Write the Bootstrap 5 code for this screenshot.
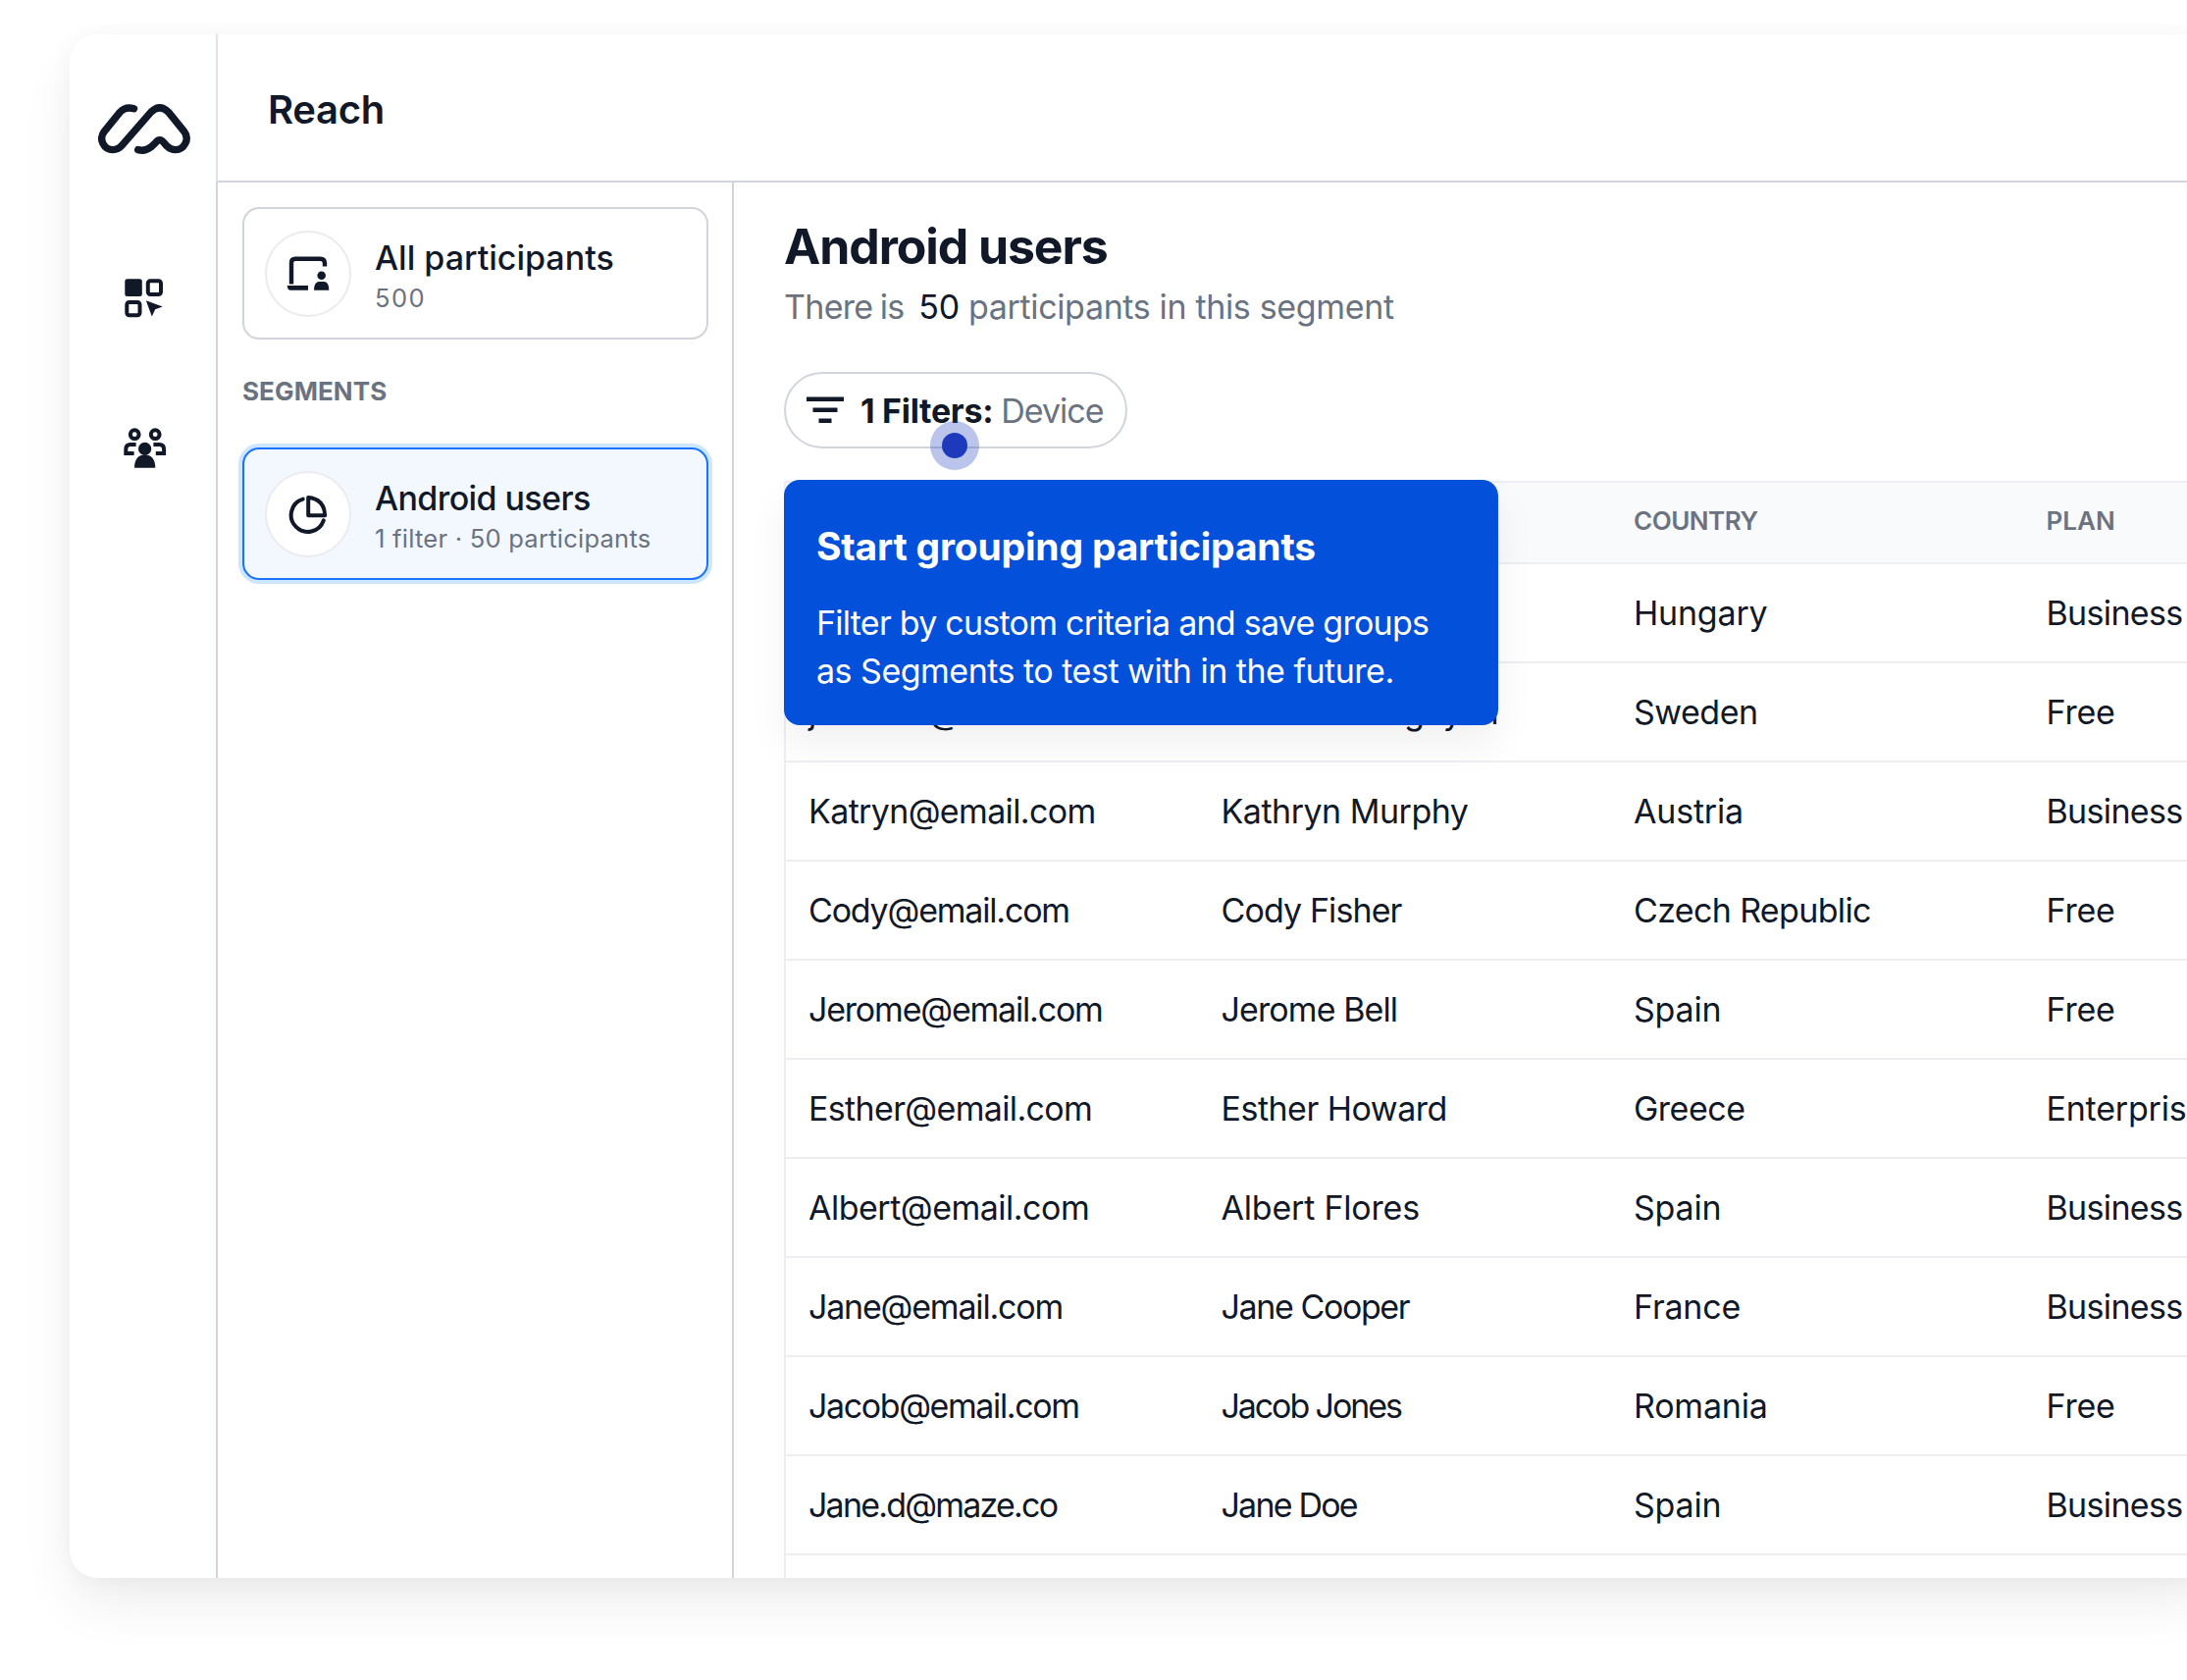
<!DOCTYPE html>
<html lang="en">
<head>
<meta charset="utf-8">
<meta name="viewport" content="width=device-width, initial-scale=1">
<title>Reach</title>
<link href="https://cdn.jsdelivr.net/npm/bootstrap@5.3.0/dist/css/bootstrap.min.css" rel="stylesheet">
<style>
:root { --ink: #111827; --muted: #6b7280; --line: #d1d5db; --hair: #ededf2; }
html, body { height: 100%; }
body { font-family: Inter, "Liberation Sans", sans-serif; font-size: 34px; color: var(--ink); background: #fff; overflow: hidden; }
.ink { color: var(--ink); }
.muted { color: var(--muted); }
.app-frame { width: 2186px; height: 1573px; margin: 35px 0 0 71px; border-radius: 28px; background: #fff;
  box-shadow: 0 28px 56px -4px rgba(0,0,0,.075), 0 2px 24px rgba(0,0,0,.04); }
.app-inner { border-radius: 28px; }
.rail { width: 149px; padding-left: 29px; }
.rail .logo { margin-top: 71px; }
.rail .nav-a { margin: 127px 0 0 27px; }
.rail .nav-b { margin: 112px 0 0 26px; }
.topbar { height: 151px; padding: 4px 0 0 51px; border-left: 2px solid #dfe2e7; border-bottom: 2px solid var(--line); }
.topbar h1 { font-size: 40px; font-weight: 600; letter-spacing: -.3px; }
.side-panel { width: 528px; padding: 25px 24px 0 25px; border-left: 2px solid var(--line); border-right: 2px solid var(--line); }
.seg { height: 135px; border: 2px solid var(--line); border-radius: 17px; padding-left: 21px; }
.seg.active { border-color: #1a73ff; background: #f3f8ff; box-shadow: 0 0 0 4px #cce6ff; }
.seg-icon { width: 88px; height: 88px; border: 2px solid #ebebf0; }
.seg-text { margin: 8px 0 0 24px; white-space: nowrap; }
.seg-title { font-weight: 500; line-height: 42px; letter-spacing: 0; }
.seg.active .seg-title { letter-spacing: -.6px; }
.seg-sub { font-size: 25.5px; line-height: 40px; letter-spacing: .25px; }
.seg-sub.fig { letter-spacing: 1.5px; }
.seg-label { font-size: 26px; font-weight: 700; line-height: 32px; margin: 37px 0 41px; letter-spacing: .1px; }
.main-pane { padding: 35px 0 0 51px; }
.main-pane h2 { font-size: 50px; font-weight: 700; line-height: 60px; letter-spacing: -1.1px; }
.lead-line { line-height: 40px; margin-top: 12px; white-space: pre; letter-spacing: -.35px; }
.lead-line .pre { letter-spacing: -.7px; word-spacing: -1.5px; }
.filter-wrap { margin-top: 46px; width: 350px; }
.pill { height: 78px; border: 2px solid var(--line); padding-left: 21px; white-space: nowrap; }
.pill .cnt { margin-left: 17px; letter-spacing: -.3px; }
.pill .dev { margin-left: 8px; letter-spacing: -1px; }
.hotspot { left: 149px; top: 50px; width: 50px; height: 50px; background: rgba(30,58,188,.3); z-index: 3; }
.hotspot::after { content: ""; width: 26px; height: 26px; border-radius: 50%; background: #1e3abc; }
.tip { left: 0; top: 110px; width: 728px; height: 250px; padding: 44px 0 0 33px; border-radius: 16px; background: #0350db; color: #fff; z-index: 2; white-space: nowrap;
  box-shadow: 0 20px 40px rgba(0,0,0,.06); }
.tip h3 { font-size: 39px; font-weight: 700; line-height: 48px; letter-spacing: -.2px; }
.tip p { line-height: 49px; margin-top: 29px; letter-spacing: -.5px; }
.tip p::first-line { letter-spacing: -.75px; }
.people { width: 1683px; margin-top: 33px; table-layout: fixed; border-left: 2px solid var(--hair); color: var(--ink); letter-spacing: -.2px; }
.people th, .people td { padding: 0 0 0 24px; vertical-align: middle; border-bottom: 2px solid var(--hair); white-space: nowrap; color: var(--ink); }
.people thead th { height: 83px; padding-bottom: 5px; border-top: 2px solid var(--hair); background: #f9fafc; font-size: 26px; font-weight: 600; color: var(--muted); letter-spacing: 0; }
.people tbody td { height: 101px; padding-bottom: 1px; }
.people td:first-child { padding-left: 23px; }
.people .k1 { letter-spacing: -.5px; }
.people .k2 { letter-spacing: -.65px; }
.people .k3 { letter-spacing: -.9px; }
.people .k4 { letter-spacing: -1.2px; }
.people .k5 { letter-spacing: -1.4px; }
.people .k6 { letter-spacing: -1.8px; }
.people .k7 { letter-spacing: -2.1px; }
</style>
<script src="https://cdn.jsdelivr.net/npm/bootstrap@5.3.0/dist/js/bootstrap.bundle.min.js"></script>
</head>
<body>
<div class="app-frame">
 <div class="app-inner d-flex h-100 overflow-hidden">
  <nav class="rail d-flex flex-column align-items-start flex-shrink-0">
    <svg class="logo" width="94" height="51" viewBox="150 257 280 152" fill="none" stroke="#111827" stroke-width="22" stroke-linecap="round" stroke-linejoin="round"><path d="M259 271Q233 263 216 282L169 340C150 365 168 396 195 396Q211 396 223 382L310 282Q337 255 364 282L411 340C430 365 410 396 385 396Q370 396 359 385L350 375Q337 358 324 375L310 388Q293 402 271 396"/></svg>
    <svg class="nav-a" width="40" height="40" viewBox="0 0 40 40" fill="#111827"><rect x=".3" y=".3" width="17.5" height="17.7" rx="2.5"/><g fill="none" stroke="#111827" stroke-width="4"><rect x="23.8" y="2.3" width="13.2" height="13.7" rx="2.4"/><rect x="2.3" y="24" width="13.2" height="13.2" rx="2.4"/></g><path d="M21.8 22.3L38.8 28.4L31.2 31.2L27.8 38.4Z"/></svg>
    <svg class="nav-b" width="44" height="42" viewBox="0 0 44 42" fill="#111827"><g fill="none" stroke="#111827" stroke-width="4"><circle cx="11.2" cy="6.7" r="4.4"/><circle cx="32.2" cy="6.7" r="4.4"/><path d="M12.6 17H7Q2.3 17 2.3 22V26H10.6M30.4 17H36.4Q41.1 17 41.1 22V26H32.8"/></g><circle cx="21.6" cy="21.4" r="6.6"/><path d="M11 40.8C11 32 15 27.6 21.6 27.6S32.3 32 32.3 40.8Z"/></svg>
  </nav>
  <div class="d-flex flex-column flex-grow-1">
    <header class="topbar d-flex align-items-center flex-shrink-0"><h1 class="m-0">Reach</h1></header>
    <div class="d-flex flex-grow-1">
      <aside class="side-panel flex-shrink-0">
        <div class="seg d-flex align-items-center">
          <div class="seg-icon rounded-circle bg-white d-flex align-items-center justify-content-center flex-shrink-0">
            <svg width="44" height="37" viewBox="0 0 44 37" fill="#111827"><path d="M5 29.5V7.8Q5 3.8 9 3.8H34.5Q39 3.8 39 8.3V11.5" fill="none" stroke="#111827" stroke-width="4.4"/><path d="M.7 31H22V35.8H4Q1 35.8 .7 31Z"/><circle cx="35.7" cy="20.7" r="4.3"/><path d="M28 35.8Q28 27 33.5 27H38Q43.3 27 43.3 35.8Z"/></svg>
          </div>
          <div class="seg-text"><div class="seg-title">All participants</div><div class="seg-sub muted fig">500</div></div>
        </div>
        <div class="seg-label muted">SEGMENTS</div>
        <div class="seg active d-flex align-items-center">
          <div class="seg-icon rounded-circle bg-white d-flex align-items-center justify-content-center flex-shrink-0">
            <svg width="40" height="40" viewBox="0 0 40 40" fill="none" stroke="#111827" stroke-width="4" stroke-linecap="round" stroke-linejoin="round"><path d="M14.7 4.6A17 17 0 1 0 35.8 26.3"/><path d="M20.2 3V21.2H37.2Q36.5 4.500 20.2 3Z"/></svg>
          </div>
          <div class="seg-text"><div class="seg-title">Android users</div><div class="seg-sub muted">1 filter · 50 participants</div></div>
        </div>
      </aside>
      <main class="main-pane flex-grow-1">
        <h2 class="m-0">Android users</h2>
        <div class="lead-line muted"><span class="pre">There is  </span><span class="ink">50</span> participants in this segment</div>
        <div class="filter-wrap position-relative">
          <div class="pill rounded-pill d-flex align-items-center">
            <svg width="38" height="28" viewBox="0 0 38 28" fill="#111827"><path d="M0 .5H38V5H0ZM6.500 11.500H31.500V16H6.500ZM12.500 22.500H25.500V27H12.500Z"/></svg>
            <span class="cnt fw-bold">1 Filters:</span><span class="dev muted">Device</span>
          </div>
          <div class="hotspot position-absolute rounded-circle d-flex align-items-center justify-content-center"></div>
          <div class="tip position-absolute">
            <h3 class="m-0">Start grouping participants</h3>
            <p class="mb-0">Filter by custom criteria and save groups<br>as Segments to test with in the future.</p>
          </div>
        </div>
        <table class="table people mb-0">
          <thead><tr><th></th><th></th><th class="k1">COUNTRY</th><th>PLAN</th></tr></thead>
          <tbody>
            <tr><td></td><td></td><td>Hungary</td><td class="k2">Business</td></tr>
            <tr><td>jackson@email.com</td><td class="k2">Savannah Nguyen</td><td class="k1">Sweden</td><td>Free</td></tr>
            <tr><td class="k2">Katryn@email.com</td><td class="k1">Kathryn Murphy</td><td>Austria</td><td class="k2">Business</td></tr>
            <tr><td class="k4">Cody@email.com</td><td class="k3">Cody Fisher</td><td class="k2">Czech Republic</td><td>Free</td></tr>
            <tr><td class="k4">Jerome@email.com</td><td class="k3">Jerome Bell</td><td>Spain</td><td>Free</td></tr>
            <tr><td class="k2">Esther@email.com</td><td class="k1">Esther Howard</td><td class="k1">Greece</td><td>Enterprise</td></tr>
            <tr><td class="k1">Albert@email.com</td><td>Albert Flores</td><td>Spain</td><td class="k2">Business</td></tr>
            <tr><td class="k4">Jane@email.com</td><td class="k5">Jane Cooper</td><td>France</td><td class="k2">Business</td></tr>
            <tr><td class="k5">Jacob@email.com</td><td class="k7">Jacob Jones</td><td>Romania</td><td>Free</td></tr>
            <tr><td class="k6">Jane.d@maze.co</td><td class="k6">Jane Doe</td><td>Spain</td><td class="k2">Business</td></tr>
            <tr><td></td><td></td><td></td><td></td></tr>
          </tbody>
        </table>
      </main>
    </div>
  </div>
 </div>
</div>
</body>
</html>
